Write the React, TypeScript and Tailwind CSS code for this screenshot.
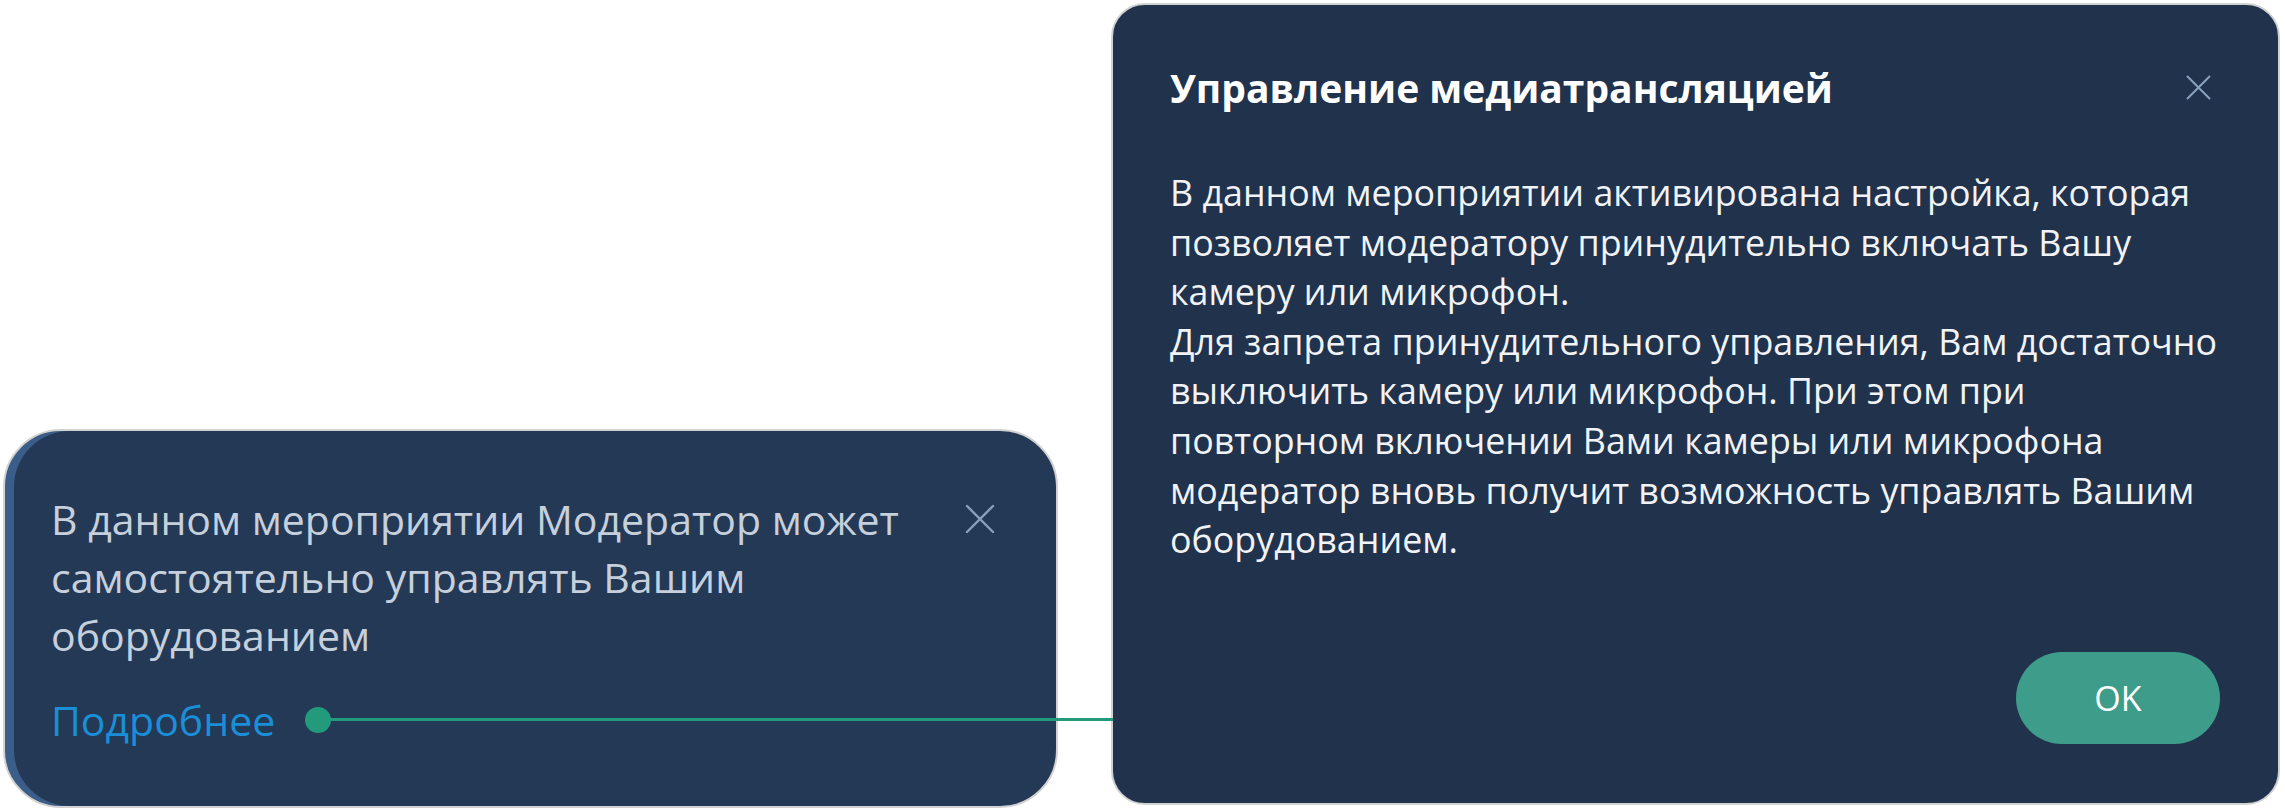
import React from "react";

function CloseIcon({ size, color }: { size: number; color: string }) {
  return (
    <svg width={size} height={size} viewBox="0 0 32 32" fill="none">
      <path
        d="M3 3L29 29M29 3L3 29"
        stroke={color}
        strokeWidth={2.4}
        strokeLinecap="round"
      />
    </svg>
  );
}

function ModeratorNotice() {
  return (
    <div className="w-[1055px] h-[379px] rounded-[58px] border-2 border-[#d2d2d2] bg-[#243955] shadow-[inset_9px_0_0_#3a5d89] pl-[46px] pr-[60px] pt-[59px]">
      <div className="flex items-start justify-between">
        <p className="text-[41px] leading-[58px] text-[#c6d0dc]">
          В данном мероприятии Модератор может
          <br />
          самостоятельно управлять Вашим
          <br />
          оборудованием
        </p>
        <button className="mt-[13px]">
          <CloseIcon size={32} color="#8aa1bd" />
        </button>
      </div>
      <div className="mt-[27px] flex items-center">
        <a className="text-[41px] leading-[58px] text-[#1a8fd8]">Подробнее</a>
        {/* connector dot with the line running to the dialog */}
        <div className="relative ml-[30px] h-[26px] w-[26px] rounded-full bg-[#229a7b]">
          <div className="absolute left-[20px] top-[11px] h-[3px] w-[788px] bg-[#229a7b]" />
        </div>
      </div>
    </div>
  );
}

function MediaDialog() {
  return (
    <div className="mb-[3px] flex h-[802px] w-[1169px] flex-col rounded-[34px] border-2 border-[#d2d2d2] bg-[#20324c] pl-[57px] pr-[58px] pb-[59px] pt-[58px]">
      <div className="flex items-start justify-between">
        <h2 className="text-[39px] font-bold leading-[50px] text-white">
          Управление медиатрансляцией
        </h2>
        <button className="mr-[8px] mt-[11px]">
          <CloseIcon size={27} color="#8aa1bd" />
        </button>
      </div>
      <p className="mt-[55px] whitespace-nowrap text-[35.8px] leading-[49.6px] text-[#f1f3f6]">
        В данном мероприятии активирована настройка, которая
        <br />
        позволяет модератору принудительно включать Вашу
        <br />
        камеру или микрофон.
        <br />
        Для запрета принудительного управления, Вам достаточно
        <br />
        выключить камеру или микрофон. При этом при
        <br />
        повторном включении Вами камеры или микрофона
        <br />
        модератор вновь получит возможность управлять Вашим
        <br />
        оборудованием.
      </p>
      <div className="mt-auto flex justify-end">
        <button className="h-[92px] w-[204px] rounded-full bg-[#3d9c8a] text-[34px] text-white">
          OK
        </button>
      </div>
    </div>
  );
}

export default function App() {
  return (
    <div
      className="h-[810px] w-[2285px] overflow-hidden bg-white"
      style={{ fontFamily: '"Open Sans", "Noto Sans", sans-serif' }}
    >
      <div className="flex items-end gap-[53px] pl-[3px] pt-[3px]">
        <ModeratorNotice />
        <MediaDialog />
      </div>
    </div>
  );
}
